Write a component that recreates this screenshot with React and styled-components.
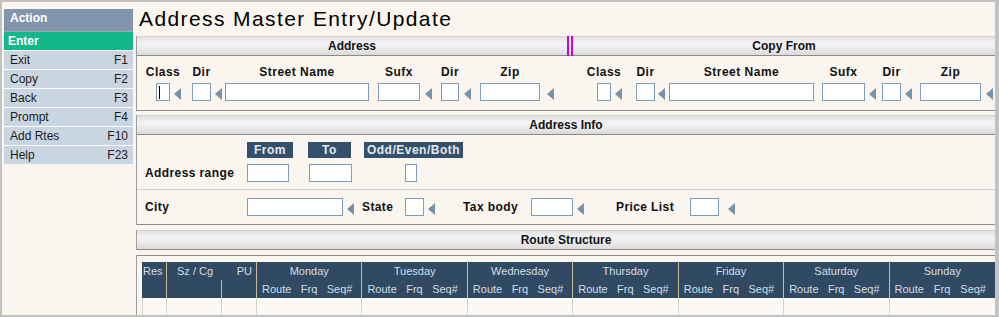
import React from "react";
import styled, { createGlobalStyle } from "styled-components";

const Global = createGlobalStyle`
  * { box-sizing: border-box; }
  html, body { margin: 0; padding: 0; background: #faf5ee; }
`;

const FONT = `"Liberation Sans", Arial, sans-serif`;

const Root = styled.div`
  width: 999px;
  height: 317px;
  border-style: solid;
  border-color: #c2c2c2;
  border-width: 2px 4px 2px 2px;
  background: #faf5ee;
  display: flex;
  overflow: hidden;
  font-family: ${FONT};
`;

/* ---------- sidebar ---------- */
const Sidebar = styled.nav`
  flex: none;
  width: 129px;
  margin: 7px 0 0 2px;
  display: flex;
  flex-direction: column;
`;
const SideHeader = styled.div`
  height: 22px;
  line-height: 19px;
  padding-left: 6px;
  background: #8195ac;
  color: #fff;
  font-weight: bold;
  font-size: 12px;
`;
const EnterItem = styled.div`
  height: 19px;
  line-height: 18px;
  border-top: 1px solid #9ca5ab;
  padding-left: 4px;
  background: #12b78a;
  color: #fff;
  font-weight: bold;
  font-size: 12px;
`;
const MenuItem = styled.div`
  height: 19px;
  border-top: 1px solid #fdfdfd;
  background: #c9d6e2;
  display: flex;
  align-items: center;
  justify-content: space-between;
  padding: 0 5px 0 6px;
  font-size: 12px;
  color: #1c1c1c;
`;

/* ---------- main ---------- */
const Main = styled.div`
  flex: 1;
  min-width: 0;
  margin-left: 3px;
  display: flex;
  flex-direction: column;
`;
const Title = styled.h1`
  margin: 0;
  height: 34px;
  line-height: 34px;
  padding-left: 3px;
  font-size: 21px;
  font-weight: normal;
  letter-spacing: 1.4px;
  color: #000;
  white-space: nowrap;
`;
const Box = styled.section`
  flex: none;
  margin-top: ${(p) => p.$mt || 0}px;
  border-left: 1px solid #9c9c9c;
  border-bottom: ${(p) => (p.$noBottom ? "none" : "1px solid #8c8c8c")};
`;
const HeaderStrip = styled.div`
  height: 20px;
  display: flex;
  border-top: 1px solid #d4d4d4;
  border-bottom: 1px solid #8a8a8a;
  background: linear-gradient(
    to bottom,
    #e1e1e1 0%,
    #f3f3f3 35%,
    #ededed 60%,
    #dadada 100%
  );
`;
const HeaderCell = styled.div`
  flex: ${(p) => (p.$w ? `0 0 ${p.$w}px` : "1")};
  text-align: center;
  font-weight: bold;
  font-size: 12px;
  line-height: 18px;
  color: #111;
`;
const Divider = styled.div`
  flex: none;
  width: 6px;
  height: 20px;
  margin: -1px 0;
  display: flex;
  gap: 2px;
`;
const MagLine = styled.div`
  width: 2px;
  background: #d000d0;
`;

/* fields */
const FieldsRow = styled.div`
  display: flex;
  padding: 9px 0 9px 0;
`;
const FieldGroup = styled.div`
  flex: ${(p) => (p.$w ? `0 0 ${p.$w}px` : "1")};
  display: flex;
  align-items: flex-end;
`;
const FieldCol = styled.div`
  flex: none;
  margin-left: ${(p) => p.$ml || 0}px;
  width: ${(p) => p.$w}px;
  display: flex;
  flex-direction: column;
  gap: 4px;
`;
const FieldLabel = styled.div`
  display: flex;
  justify-content: center;
  white-space: nowrap;
  height: 14px;
  line-height: 14px;
  font-size: 12px;
  font-weight: bold;
  letter-spacing: 0.5px;
  color: #111;
`;
const InputBox = styled.div`
  flex: none;
  width: ${(p) => p.$w}px;
  height: 18px;
  margin-left: ${(p) => p.$ml || 0}px;
  background: #fff;
  border: 1px solid #7f9db9;
  display: flex;
  align-items: center;
`;
const Caret = styled.span`
  width: 1px;
  height: 13px;
  margin-left: 2px;
  background: #000;
`;
const ArrowWrap = styled.span`
  flex: none;
  display: block;
  width: 7px;
  height: 12px;
  margin-left: ${(p) => p.$ml || 0}px;
  margin-bottom: ${(p) => p.$mb ?? 3}px;
`;
const Arrow = ({ ml, mb }) => (
  <ArrowWrap $ml={ml} $mb={mb}>
    <svg width="7" height="12" viewBox="0 0 7 12">
      <polygon points="7,0 7,12 0,6" fill="#7891aa" />
    </svg>
  </ArrowWrap>
);

/* address info */
const RangeGrid = styled.div`
  display: grid;
  grid-template-columns: 102px 61px 56px 99px;
  grid-template-rows: 16px 18px;
  row-gap: 6px;
  padding: 7px 0 0 8px;
`;
const ColHead = styled.div`
  width: ${(p) => p.$w}px;
  height: 16px;
  line-height: 16px;
  background: #34506a;
  color: #e2e9ef;
  font-size: 12px;
  font-weight: bold;
  letter-spacing: 0.5px;
  text-align: center;
  white-space: nowrap;
`;
const InfoLabel = styled.div`
  flex: none;
  width: ${(p) => (p.$w ? `${p.$w}px` : "auto")};
  margin-left: ${(p) => p.$ml || 0}px;
  font-size: 12px;
  font-weight: bold;
  letter-spacing: 0.4px;
  color: #111;
  line-height: 18px;
  white-space: nowrap;
`;
const Separator = styled.div`
  height: 1px;
  margin-top: 7px;
  background: #c6d4e1;
`;
const CityRow = styled.div`
  height: 34px;
  display: flex;
  align-items: center;
  padding-left: 8px;
`;
const CityArrow = styled.span`
  display: flex;
  align-items: center;
`;

/* table */
const TableWrap = styled.div`
  flex: 1;
  margin-top: 5px;
  border-top: 1px solid #8c8c8c;
  border-left: 1px solid #9c9c9c;
  padding: 6px 0 0 5px;
`;
const Grid = styled.div`
  display: grid;
  grid-template-columns: 25px 55px 35px repeat(7, 1fr);
  grid-template-rows: 18px 18px 18px;
  font-size: 11px;
`;
const HCell = styled.div`
  grid-column: ${(p) => p.$col};
  grid-row: ${(p) => p.$row};
  background: #2f4a62;
  color: #d5dee7;
  line-height: 18px;
  white-space: nowrap;
  text-align: ${(p) => p.$align || "left"};
  padding: ${(p) => p.$pad || "0"};
  border-right: ${(p) => (p.$sep ? "1px solid #cabb90" : "none")};
`;
const SubCell = styled(HCell)`
  display: flex;
  justify-content: space-between;
  padding: 0 9px 0 5px;
`;
const DCell = styled.div`
  background: #fcf9f4;
  border-right: ${(p) => (p.$last ? "none" : "1px solid #d8d3ca")};
  border-left: ${(p) => (p.$first ? "1px solid #d8d3ca" : "none")};
`;

const addrFields = [
  { label: "Class", w: 14, ml: 19, caret: true, arrow: 4 },
  { label: "Dir", w: 19, ml: 11, arrow: 4 },
  { label: "Street Name", w: 144, ml: 3 },
  { label: "Sufx", w: 42, ml: 9, arrow: 5 },
  { label: "Dir", w: 18, ml: 9, arrow: 5 },
  { label: "Zip", w: 60, ml: 9, arrow: 7 },
];
const copyFields = [
  { label: "Class", w: 14, ml: 24, arrow: 4 },
  { label: "Dir", w: 19, ml: 14, arrow: 3 },
  { label: "Street Name", w: 145, ml: 4 },
  { label: "Sufx", w: 43, ml: 8, arrow: 4 },
  { label: "Dir", w: 19, ml: 6, arrow: 4 },
  { label: "Zip", w: 61, ml: 8, arrow: 5 },
];

const days = [
  "Monday",
  "Tuesday",
  "Wednesday",
  "Thursday",
  "Friday",
  "Saturday",
  "Sunday",
];

const menu = [
  ["Exit", "F1"],
  ["Copy", "F2"],
  ["Back", "F3"],
  ["Prompt", "F4"],
  ["Add Rtes", "F10"],
  ["Help", "F23"],
];

function Fields({ list }) {
  return list.map((f, i) => (
    <React.Fragment key={i}>
      <FieldCol $w={f.w} $ml={f.ml}>
        <FieldLabel>{f.label}</FieldLabel>
        <InputBox $w={f.w}>{f.caret && <Caret />}</InputBox>
      </FieldCol>
      {f.arrow !== undefined && <Arrow ml={f.arrow} />}
    </React.Fragment>
  ));
}

export default function App() {
  return (
    <>
      <Global />
      <Root>
        <Sidebar>
          <SideHeader>Action</SideHeader>
          <EnterItem>Enter</EnterItem>
          {menu.map(([a, k]) => (
            <MenuItem key={a}>
              <span>{a}</span>
              <span>{k}</span>
            </MenuItem>
          ))}
        </Sidebar>

        <Main>
          <Title>Address Master Entry/Update</Title>

          <Box>
            <HeaderStrip>
              <HeaderCell $w={430}>Address</HeaderCell>
              <Divider>
                <MagLine />
                <MagLine />
              </Divider>
              <HeaderCell>Copy From</HeaderCell>
            </HeaderStrip>
            <FieldsRow>
              <FieldGroup $w={436}>
                <Fields list={addrFields} />
              </FieldGroup>
              <FieldGroup>
                <Fields list={copyFields} />
              </FieldGroup>
            </FieldsRow>
          </Box>

          <Box $mt={4}>
            <HeaderStrip>
              <HeaderCell>Address Info</HeaderCell>
            </HeaderStrip>
            <RangeGrid>
              <span />
              <ColHead $w={46}>From</ColHead>
              <ColHead $w={43}>To</ColHead>
              <ColHead $w={99}>Odd/Even/Both</ColHead>
              <InfoLabel>Address range</InfoLabel>
              <InputBox $w={42} />
              <InputBox $w={43} $ml={1} />
              <InputBox $w={12} $ml={41} />
            </RangeGrid>
            <Separator />
            <CityRow>
              <InfoLabel $w={102}>City</InfoLabel>
              <InputBox $w={96} />
              <CityArrow>
                <Arrow ml={4} mb={0} />
              </CityArrow>
              <InfoLabel $w={43} $ml={8}>
                State
              </InfoLabel>
              <InputBox $w={19} />
              <CityArrow>
                <Arrow ml={4} mb={0} />
              </CityArrow>
              <InfoLabel $w={68} $ml={28}>
                Tax body
              </InfoLabel>
              <InputBox $w={42} />
              <CityArrow>
                <Arrow ml={4} mb={0} />
              </CityArrow>
              <InfoLabel $w={74} $ml={32}>
                Price List
              </InfoLabel>
              <InputBox $w={29} />
              <CityArrow>
                <Arrow ml={9} mb={0} />
              </CityArrow>
            </CityRow>
          </Box>

          <Box $mt={5} $noBottom>
            <HeaderStrip>
              <HeaderCell>Route Structure</HeaderCell>
            </HeaderStrip>
          </Box>

          <TableWrap>
            <Grid>
              <HCell $col="1" $row="1 / 3" $pad="0 0 0 1px" $sep>
                Res
              </HCell>
              <HCell $col="2" $row="1" $pad="0 0 0 10px">
                Sz / Cg
              </HCell>
              <HCell $col="3" $row="1" $align="right" $pad="0 4px 0 0" $sep>
                PU
              </HCell>
              <HCell $col="2" $row="2" $sep />
              <HCell $col="3" $row="2" $sep />
              {days.map((d, i) => (
                <HCell
                  key={d}
                  $col={String(4 + i)}
                  $row="1"
                  $align="center"
                  $sep={i < days.length - 1}
                >
                  {d}
                </HCell>
              ))}
              {days.map((d, i) => (
                <SubCell
                  key={d + "s"}
                  $col={String(4 + i)}
                  $row="2"
                  $sep={i < days.length - 1}
                >
                  <span>Route</span>
                  <span>Frq</span>
                  <span>Seq#</span>
                </SubCell>
              ))}
              {Array.from({ length: 10 }).map((_, i) => (
                <DCell key={i} $first={i === 0} $last={i === 9} />
              ))}
            </Grid>
          </TableWrap>
        </Main>
      </Root>
    </>
  );
}
